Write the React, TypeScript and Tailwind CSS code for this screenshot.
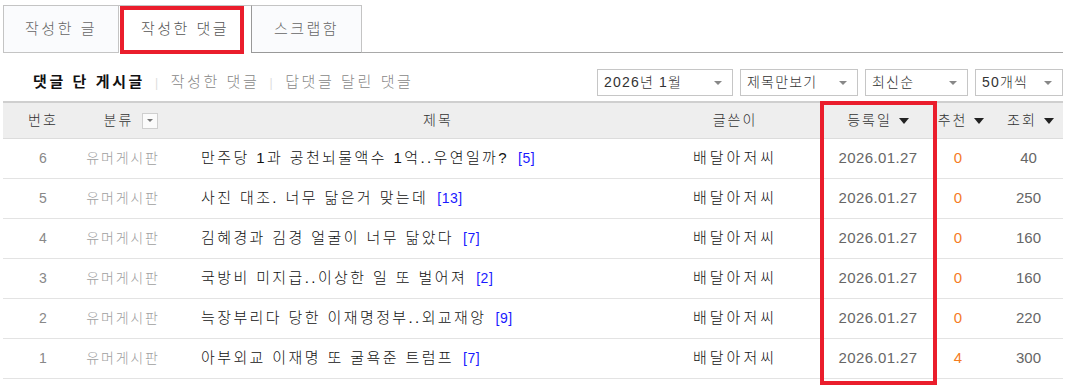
import React from "react";

const rows = [
  { n: 6, t: "만주당 1과 공천뇌물액수 1억..우연일까?", c: 5, r: 0, v: 40 },
  { n: 5, t: "사진 대조. 너무 닮은거 맞는데", c: 13, r: 0, v: 250 },
  { n: 4, t: "김혜경과 김경 얼굴이 너무 닮았다", c: 7, r: 0, v: 160 },
  { n: 3, t: "국방비 미지급..이상한 일 또 벌어져", c: 2, r: 0, v: 160 },
  { n: 2, t: "늑장부리다 당한 이재명정부..외교재앙", c: 9, r: 0, v: 220 },
  { n: 1, t: "아부외교 이재명 또 굴욕준 트럼프", c: 7, r: 4, v: 300 },
];

const font = { fontFamily: '"Liberation Sans", "Noto Sans CJK KR", sans-serif' };

function SortArrow() {
  return (
    <span className="ml-[7px] inline-block w-0 h-0 border-l-[5px] border-r-[5px] border-t-[6px] border-l-transparent border-r-transparent border-t-[#222]" />
  );
}

function Select({ w, label }: { w: string; label: string }) {
  return (
    <div className={`${w} h-[27px] border border-[#c6c6c6] bg-white flex items-center justify-between pl-[6px] pr-[10px] text-[14px] text-[#333] tracking-[1.2px] font-light`}>
      <span>{label}</span>
      <span className="inline-block w-0 h-0 border-l-[4px] border-r-[4px] border-t-[4px] border-l-transparent border-r-transparent border-t-[#888]" />
    </div>
  );
}

export default function App() {
  return (
    <div className="w-[1081px] h-[391px] bg-white overflow-hidden px-[3px] pt-[5px]" style={font}>
      {/* Tabs */}
      <div className="flex w-[1060px] h-[48px] border-b border-[#a9a9a9] relative">
        <div className="w-[116px] h-[48px] -mb-px border border-[#c4c4c4] bg-[#fafbfd] flex items-center justify-center text-[15px] text-[#666] tracking-[2.5px] font-light">
          작성한 글
        </div>
        <div className="relative w-[132px] h-[48px] -mb-px bg-white border-t border-[#c4c4c4] flex items-center justify-center text-[15px] text-[#555] tracking-[2.5px] font-light">
          작성한 댓글
          <div className="absolute left-[1px] top-0 w-[124px] h-[48px] border-[4px] border-[#ea1d2c]" />
        </div>
        <div className="w-[111px] h-[48px] -mb-px border border-[#c4c4c4] border-l-[#999] border-b-[#999] bg-[#fafbfd] flex items-center justify-center text-[15px] text-[#666] tracking-[2.5px] font-light">
          스크랩함
        </div>
      </div>

      {/* Sub nav + selects */}
      <div className="flex items-center justify-between w-[1060px] mt-[16px] h-[27px]">
        <div className="flex items-center pl-[30px] text-[15px] tracking-[2.6px]">
          <span className="font-bold text-[#111]">댓글 단 게시글</span>
          <span className="mx-[10px] text-[#ddd] text-[12px] font-light">|</span>
          <span className="text-[#888] font-light">작성한 댓글</span>
          <span className="mx-[10px] text-[#ddd] text-[12px] font-light">|</span>
          <span className="text-[#888] font-light">답댓글 달린 댓글</span>
        </div>
        <div className="flex items-center gap-[7px]">
          <Select w="w-[136px]" label="2026년 1월" />
          <Select w="w-[118px]" label="제목만보기" />
          <Select w="w-[103px]" label="최신순" />
          <Select w="w-[88px]" label="50개씩" />
        </div>
      </div>

      {/* Table */}
      <div className="relative w-[1060px] mt-[5px]">
        <div className="grid grid-cols-[80px_80px_530px_127px_116px_46px_81px] h-[38px] bg-[#eeeeee] border-t-2 border-[#cfcfcf] border-b border-b-[#dcdcdc] items-center text-[14px] text-[#333] tracking-[2px] font-light">
          <div className="text-center">번호</div>
          <div className="flex items-center justify-center pl-[16px]">
            <span>분류</span>
            <span className="ml-[9px] w-[16px] h-[16px] border border-[#cfcfcf] bg-[#fbfbfb] flex items-center justify-center">
              <span className="inline-block w-0 h-0 border-l-[3px] border-r-[3px] border-t-[3px] border-l-transparent border-r-transparent border-t-[#777]" />
            </span>
          </div>
          <div className="text-center pl-[20px]">제목</div>
          <div className="text-center pr-[43px]">글쓴이</div>
          <div className="flex items-center justify-center">
            <span>등록일</span>
            <SortArrow />
          </div>
          <div className="flex items-center justify-center whitespace-nowrap pl-[4px]">
            <span>추천</span>
            <SortArrow />
          </div>
          <div className="flex items-center justify-center pl-[16px]">
            <span>조회</span>
            <SortArrow />
          </div>
        </div>
        {rows.map((r) => (
          <div
            key={r.n}
            className="grid grid-cols-[80px_80px_530px_127px_116px_44px_83px] h-[40px] border-b border-[#e3e3e3] items-center font-light"
          >
            <div className="text-center text-[14px] text-[#888]">{r.n}</div>
            <div className="text-center text-[14px] text-[#a0a0a0] tracking-[1.8px]">유머게시판</div>
            <div className="pl-[38px] text-[15px] text-[#111] tracking-[2.4px] whitespace-nowrap">
              {r.t}
              <span className="ml-[9px] text-[14px] text-[#1a1aff] tracking-[0.5px]">[{r.c}]</span>
            </div>
            <div className="text-center pr-[43px] text-[15px] text-[#111] tracking-[3px] whitespace-nowrap">배달아저씨</div>
            <div className="text-center text-[15px] text-[#666] tracking-[0.4px]">2026.01.27</div>
            <div className="text-center text-[15px] text-[#f57c1f]">{r.r}</div>
            <div className="text-center pl-[14px] text-[15px] text-[#666]">{r.v}</div>
          </div>
        ))}
        <div className="absolute left-[817px] top-0 w-[117px] h-[284px] border-[4px] border-[#ea1d2c] pointer-events-none" />
      </div>
    </div>
  );
}
